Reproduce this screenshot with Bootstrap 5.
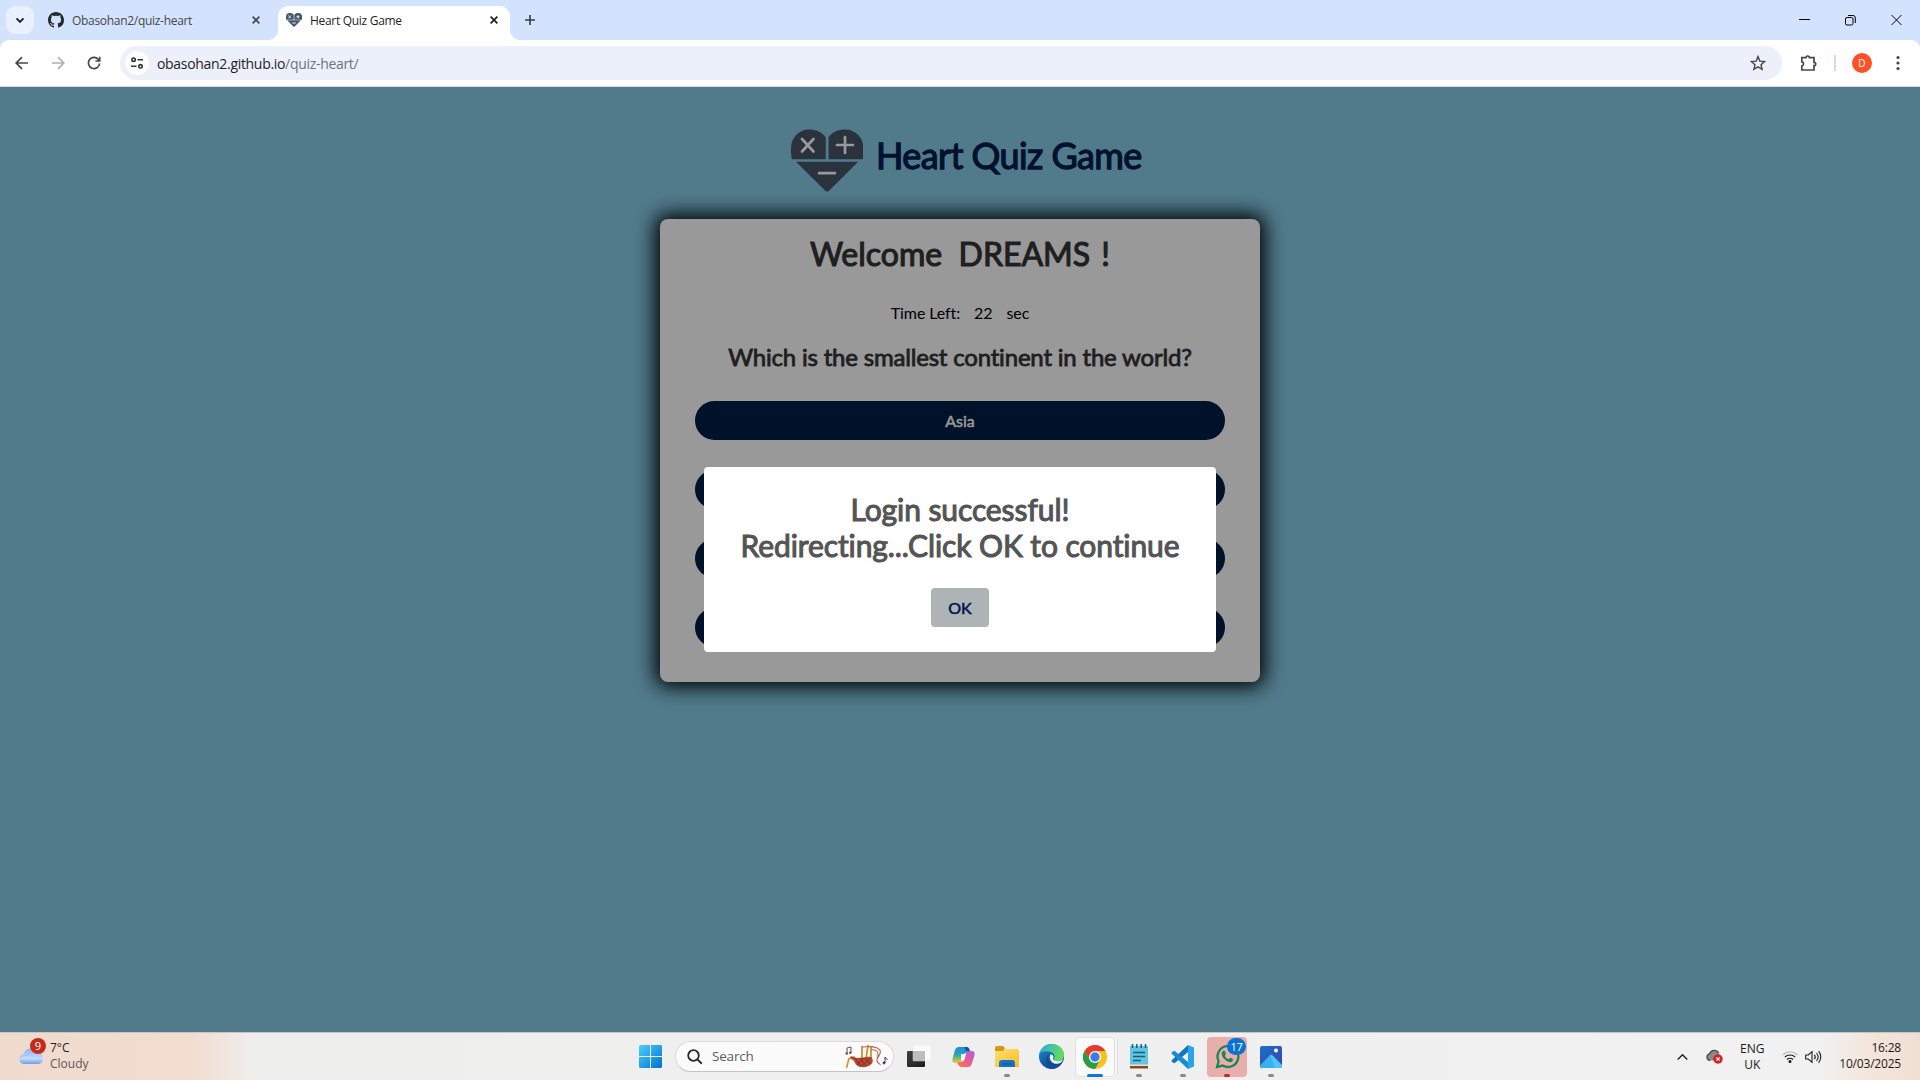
<!DOCTYPE html>
<html lang="en">
<head>
<meta charset="utf-8">
<title>Heart Quiz Game</title>
<link href="https://cdn.jsdelivr.net/npm/bootstrap@5.3.0/dist/css/bootstrap.min.css" rel="stylesheet">
<style>
body{width:1920px;height:1080px;overflow:hidden;font-family:"Open Sans","Noto Sans",sans-serif;color:#1f1f1f}
svg{display:block;flex:none}
.tabstrip{height:40px;background:#d3e3fd;font-size:12px;letter-spacing:-.3px}
.tabsearch{width:28px;height:28px;margin:6px 0 0 6px;border-radius:9px;background:#e9f1fe}
.btab{height:34px;margin-top:6px;padding-bottom:6px}
.btab-idle{width:230px;padding-left:14px;margin-right:14px;color:#474747;padding-bottom:6px}
.btab-on{width:232px;padding-left:8px;background:#fff;border-radius:10px 10px 0 0;position:relative}
.btab-on::before,.btab-on::after{content:"";position:absolute;bottom:0;width:10px;height:10px}
.btab-on::before{left:-10px;background:radial-gradient(circle at 0 0,transparent 9.6px,#fff 10.2px)}
.btab-on::after{right:-10px;background:radial-gradient(circle at 100% 0,transparent 9.6px,#fff 10.2px)}
.tabname{margin-left:8px;padding-top:2px;white-space:nowrap}
.toolrow-wrap{background:#d3e3fd}
.toolrow{height:47px;background:#fff;border-radius:9px 9px 0 0;border-bottom:1px solid #d5dbe0;padding:0 14px 0 14px}
.omni{height:34px;background:#ebf0fa;border-radius:17px;width:1662px;margin-left:18px;padding:0 16px 0 5px;font-size:14px}
.siteinfo{width:24px;height:24px;border-radius:50%;background:#fff}
.urltext{margin-left:8px;letter-spacing:-.31px;white-space:nowrap}
.avatar{width:20px;height:20px;border-radius:50%;background:#fa5128;color:#fff;font-size:10px}
.toolsep{width:2px;height:16px;background:#c9dcfb}
.stage{height:945px;background:#517b8b;font-family:Lato,sans-serif;font-variant-ligatures:none;position:relative}
.faux{font-weight:400;-webkit-text-stroke:.035em currentColor}
.brandrow{height:132px;padding-top:42px;padding-left:791px}
.brandname{font-size:36px;line-height:44px;letter-spacing:-.58px;margin:4px 0 0 12px;color:#00112d;white-space:nowrap}
.quizcard{width:600px;height:463px;margin:0 auto;border-radius:8px;background:#999;box-shadow:0 0 20px 5px #000;padding:13px 35px 35px}
.welcome{font-size:32px;line-height:44px;color:#1f1f1f;white-space:pre}
.bang{margin-left:3px}
.timerow{font-size:16px;line-height:24px;letter-spacing:-.1px;color:#000;margin-top:25px}
.question{font-size:24px;line-height:36px;letter-spacing:-.19px;margin-top:14px;color:#1f1f1f;white-space:nowrap}
.answer{height:39px;border-radius:19.5px;background:#00112a;color:#999;font-size:16px;line-height:39px}
.answers{gap:30px;margin-top:26px}
.dialogbox{position:absolute;left:704px;top:380px;width:512px;height:185px;background:#fff;border-radius:4px;padding-top:24px}
.dialogmsg{font-size:30px;line-height:36px;letter-spacing:-.1px;color:#545454;white-space:nowrap}
.okbtn{width:58px;height:39px;border-radius:4px;background:#aeb3b6;color:#00194a;font-size:16px;line-height:39px;margin-top:25px}
.taskbar{height:48px;border-top:1px solid #c9c5c5;background:linear-gradient(90deg,#efdacd 0,#f2ddd0 190px,#f0e6df 225px,#eeeeed 255px,#efefef 900px,#f1f1f1 1820px,#f4e6dc 1865px,#f1dfd3 1920px);font-size:12px;line-height:16px}
.weather{width:628px;padding-left:18px}
.wxbadge{position:absolute;left:12px;top:-8px;width:16px;height:16px;border-radius:50%;background:#c42b1c;color:#fff;font-size:11px;line-height:16px}
.slot{width:44px;height:47px;position:relative}
.slot-tile{width:40px;height:40px;border-radius:4px}
.slot-on{background:#fafafa;border:1px solid #e0e0e0;box-shadow:3px 0 0 -1px #f7f7f7,4px 0 0 -1px #dedede}
.slot-alert{background:#e8aeab}
.pip{position:absolute;bottom:3px;left:19px;width:6px;height:3px;border-radius:2px;background:#8a8a8a}
.pip-on{left:14px;width:16px;background:#0a78d4}
.pip-red{background:#c42b1c}
.msgbadge{position:absolute;left:22px;top:5px;width:19px;height:17px;border-radius:9px;background:#0a72d0;color:#fff;font-size:11px;line-height:17px;letter-spacing:-.3px}
.searchpill{width:219px;height:31px;border-radius:16px;background:#fbfbfb;border:1px solid #dadada;border-bottom-color:#c4c4c4;margin:0 3px 0 3px;padding:0 5px 0 11px;font-size:13.5px;color:#5d5d5d}
.barlift{margin-top:-2px}
.tray{color:#1b1b1b}
</style>
<script src="https://cdn.jsdelivr.net/npm/bootstrap@5.3.0/dist/js/bootstrap.bundle.min.js"></script>
</head>
<body class="d-flex flex-column">
<svg width="0" height="0" class="position-absolute"><defs>
<symbol id="heart" viewBox="0 0 72 63">
<path d="M34.700 30.200H.9C0 27 0 24 0 19A17.600 18.500 0 0 1 17.600.5C25 .5 31 3 34.700 8.500zM37.600 30.200H71.500C72.400 27 72.400 24 72.400 19A17.600 18.500 0 0 0 54.700.5C47 .5 41 3 37.600 8.500zM5 32.800H67.200L38 61.800Q36 63.400 34.300 61.800z"/>
</symbol>
<linearGradient id="gwin" x1="0" y1="0" x2="1" y2="1"><stop offset="0" stop-color="#4dd0fb"/><stop offset="1" stop-color="#0070d0"/></linearGradient>
<linearGradient id="gcl" x1="0" y1="0" x2="0" y2="1"><stop offset="0" stop-color="#8fb2ef"/><stop offset=".65" stop-color="#c4dcfa"/><stop offset="1" stop-color="#6f9be8"/></linearGradient>
<linearGradient id="gfold" x1="0" y1="0" x2="1" y2="1"><stop offset="0" stop-color="#ffdf72"/><stop offset="1" stop-color="#f8bd22"/></linearGradient>
<linearGradient id="gcoA" x1="0" y1="0" x2="0" y2="1"><stop offset="0" stop-color="#1b8df0"/><stop offset=".5" stop-color="#2ea7a0"/><stop offset="1" stop-color="#f2d02a"/></linearGradient>
<linearGradient id="gcoB" x1="1" y1="0" x2="0" y2="1"><stop offset="0" stop-color="#a462e8"/><stop offset=".5" stop-color="#ea5a98"/><stop offset="1" stop-color="#ff7a3a"/></linearGradient>
<linearGradient id="gedA" x1="0" y1="0" x2="1" y2=".3"><stop offset="0" stop-color="#2aa9e6"/><stop offset="1" stop-color="#63dd58"/></linearGradient>
<linearGradient id="gedB" x1="0" y1="0" x2=".6" y2="1"><stop offset="0" stop-color="#1b8fd8"/><stop offset="1" stop-color="#0c3f85"/></linearGradient>
<linearGradient id="gph" x1="0" y1="0" x2="1" y2="1"><stop offset="0" stop-color="#1a72c8"/><stop offset="1" stop-color="#3b3fae"/></linearGradient>
<linearGradient id="gtv" x1="0" y1="0" x2="1" y2="1"><stop offset="0" stop-color="#404040"/><stop offset="1" stop-color="#1c1c1c"/></linearGradient>
</defs></svg>

<header>
 <div class="tabstrip d-flex">
  <div class="tabsearch d-flex align-items-center justify-content-center"><svg width="10" height="10" fill="none" stroke="#1f1f1f" stroke-width="1.9"><path d="M1.500 3.300 5 6.800l3.500-3.500"/></svg></div>
  <div class="btab btab-idle d-flex align-items-center">
   <svg width="16" height="16" viewBox="0 0 16 16" fill="#24292f"><path d="M8 0C3.580 0 0 3.580 0 8c0 3.540 2.290 6.530 5.470 7.590.4.070.55-.17.55-.38 0-.19-.01-.82-.01-1.490-2.010.37-2.530-.49-2.690-.94-.09-.23-.48-.94-.82-1.130-.28-.15-.68-.52-.01-.53.63-.01 1.080.58 1.230.82.72 1.210 1.870.87 2.330.66.07-.52.28-.87.51-1.070-1.780-.2-3.640-.89-3.640-3.950 0-.87.31-1.590.82-2.150-.08-.2-.36-1.020.08-2.120 0 0 .67-.21 2.200.82.64-.18 1.320-.27 2-.27s1.360.09 2 .27c1.530-1.040 2.200-.82 2.200-.82.44 1.100.16 1.920.08 2.120.51.56.82 1.270.82 2.150 0 3.070-1.870 3.750-3.650 3.950.29.25.54.73.54 1.480 0 1.070-.01 1.930-.01 2.200 0 .21.15.46.55.38A8.010 8.010 0 0 0 16 8c0-4.420-3.580-8-8-8"/></svg>
   <span class="tabname">Obasohan2/quiz-heart</span>
   <svg class="ms-auto me-1" width="8" height="8" stroke="#474747" stroke-width="1.600"><path d="M.6.6l6.800 6.800M7.400.6.600 7.400"/></svg>
  </div>
  <div class="btab btab-on d-flex align-items-center">
   <svg width="16" height="14" viewBox="0 0 72 63" fill="#44566b"><use href="#heart" width="72" height="63"/><path d="M11 11l11 12M22 11L11 23M54 10v14M47 17h14M28 45h16" stroke="#fff" stroke-width="4"/></svg>
   <span class="tabname">Heart Quiz Game</span>
   <svg class="ms-auto" width="8" height="8" style="margin-right:12px" stroke="#1f1f1f" stroke-width="1.700"><path d="M.6.6l6.800 6.800M7.400.6.600 7.400"/></svg>
  </div>
  <svg width="10" height="40" style="margin-left:15px" stroke="#3c3c3c" stroke-width="1.600"><path d="M0 20h10M5 15v10"/></svg>
  <div class="ms-auto d-flex" style="padding-right:18px;gap:35px">
   <svg width="11" height="40" stroke="#000"><path d="M0 19.500h11"/></svg>
   <svg width="11" height="40" fill="none" stroke="#000"><rect x=".5" y="17.500" width="7.500" height="7.500" rx="1.500"/><path d="M3 15.500h5a2.300 2.300 0 0 1 2.300 2.300V23"/></svg>
   <svg width="11" height="40" stroke="#000"><path d="M.5 15l10 10M10.500 15l-10 10"/></svg>
  </div>
 </div>
 <div class="toolrow-wrap"><div class="toolrow d-flex align-items-center">
  <svg width="15" height="16" fill="none" stroke="#474747" stroke-width="1.700"><path d="M14 8H2.500M8 2.200 2.200 8 8 13.800"/></svg>
  <svg width="15" height="16" style="margin-left:22px" fill="none" stroke="#b0b0b0" stroke-width="1.700"><path d="M1 8h11.500M7 2.200 12.800 8 7 13.800"/></svg>
  <svg width="16" height="16" style="margin-left:20px" fill="none" stroke="#474747" stroke-width="1.700"><path d="M13.600 8.500A5.600 5.600 0 1 1 12.200 4.200L13.500 5.700M13.700 1.700V6H9.400"/></svg>
  <div class="omni d-flex align-items-center">
   <div class="siteinfo d-flex align-items-center justify-content-center"><svg width="14" height="14" fill="none" stroke="#303030" stroke-width="1.600"><circle cx="3.600" cy="3.700" r="1.700"/><path d="M7.500 3.700H13M1 10.300h5.500"/><circle cx="10.500" cy="10.300" r="1.700"/></svg></div>
   <span class="urltext">obasohan2.github.io<span class="text-secondary">/quiz-heart/</span></span>
   <svg class="ms-auto" width="16" height="16" viewBox="0 0 16 16" fill="none" stroke="#474747" stroke-width="1.400"><path d="M8 1.600l1.800 4.500 4.900.4-3.700 3.200 1.100 4.700L8 11.900l-4.100 2.500L5 9.700 1.300 6.500l4.900-.4z"/></svg>
  </div>
  <svg width="18" height="18" style="margin-left:18px" fill="none" stroke="#474747" stroke-width="1.700"><path d="M1.800 3.700H6a1.700 1.700 0 0 1 3.400 0H14v4.600a1.700 1.700 0 0 1 0 3.400V16H1.800v-4a2.200 2.200 0 0 0 0-4.300z"/></svg>
  <div class="toolsep" style="margin-left:16px"></div>
  <div class="avatar d-flex align-items-center justify-content-center" style="margin-left:16px">D</div>
  <svg width="4" height="16" style="margin-left:24px" fill="#474747"><circle cx="2" cy="2.500" r="1.600"/><circle cx="2" cy="8" r="1.600"/><circle cx="2" cy="13.500" r="1.600"/></svg>
 </div></div>
</header>

<main class="stage">
 <div class="brandrow d-flex">
  <svg width="73" height="63" viewBox="0 0 73 63" fill="#29323d"><use href="#heart" width="72" height="63" style="overflow:visible"/><path d="M11 10l11.500 12.500M22.500 10L11 22.500M54 8v16M46 16h16M28 44.200h16" stroke="#999" stroke-width="2.700" stroke-linecap="round"/></svg>
  <h1 class="brandname faux">Heart Quiz Game</h1>
 </div>
 <section class="quizcard d-flex flex-column text-center">
  <h2 class="welcome faux mb-0"><span>Welcome  DREAMS <span class="bang">!</span></span></h2>
  <div class="timerow d-flex justify-content-center"><span>Time Left:</span><span style="margin:0 14px">22</span><span>sec</span></div>
  <h3 class="question faux mb-0">Which is the smallest continent in the world?</h3>
  <div class="answers d-flex flex-column">
   <div class="answer faux">Asia</div><div class="answer"></div><div class="answer"></div><div class="answer"></div>
  </div>
 </section>
 <div class="dialogbox d-flex flex-column align-items-center text-center">
  <div class="dialogmsg faux">Login successful!<br>Redirecting...Click OK to continue</div>
  <div class="okbtn faux">OK</div>
 </div>
</main>

<footer class="taskbar d-flex align-items-center">
 <div class="weather d-flex align-items-center barlift">
  <div class="position-relative">
   <svg width="26" height="20" viewBox="0 0 26 20"><path d="M6 18a5 5 0 0 1-.6-9.900A8 8 0 0 1 20 6.500 5.800 5.800 0 0 1 20 18z" fill="url(#gcl)"/><path d="M1.500 12Q5 8 10 9.500" fill="none" stroke="#a8c4f4"/></svg>
   <div class="wxbadge text-center">9</div>
  </div>
  <div style="margin-left:6px"><div>7°C</div><div style="color:#5c5855">Cloudy</div></div>
 </div>
 <div class="slot d-flex align-items-center justify-content-center"><svg width="23" height="23" fill="url(#gwin)"><path d="M1 0h10v11H0V1zM12 0h10l1 1v10H12zM0 12h11v11H1l-1-1zM12 12h11v10l-1 1H12z"/></svg></div>
 <div class="searchpill d-flex align-items-center">
  <svg width="16" height="16" fill="none" stroke="#2b2b2b" stroke-width="1.800"><circle cx="6.500" cy="6.500" r="5.300"/><path d="M10.400 10.400l4.400 4.400" stroke-width="2"/></svg>
  <span style="margin-left:9px;letter-spacing:-.2px" class="barlift">Search</span>
  <svg class="ms-auto" width="43" height="24" viewBox="0 0 43 24" fill="none"><path d="M17 14V1M21 14L23 0M26 14V2" stroke="#c98f22" stroke-width="1.700"/><path d="M4 13L1.500 23M3 14l7-2" stroke="#c99a2c" stroke-width="1.600"/><path d="M5 12c2-2 4 1 8 1s9-2 13-1c4 4 1 9-6 10-7 1-9-2-11-6-1-2-3-1-4-4z" fill="#b9462e"/><path d="M10 13l6 8M15 13l6 8M20 13l5 6M12 20l7-7M17 21l8-8" stroke="#702c28" stroke-width=".8"/><path d="M17 2c6 0 13-2 18 3 2 5-4 7-3 11 1 3 4 3 3 4M26 5c5-1 9 2 6 9" stroke="#bd644b" stroke-width="1.100"/><path d="M2 9V3l4-1v6" stroke="#654d56" stroke-width="1"/><circle cx="1.700" cy="8.500" r="1.200" fill="#654d56"/><circle cx="5.200" cy="7.800" r="1.200" fill="#654d56"/><path d="M40 18v-6l2.500 3" stroke="#4c3568"/><circle cx="39" cy="18" r="1.400" fill="#4c3568"/></svg>
 </div>
 <div class="slot d-flex align-items-center justify-content-center"><svg width="24" height="22" class="barlift"><rect y="6" width="18" height="16" rx="1" fill="url(#gtv)"/><rect x="6" width="18" height="16" rx="1" fill="#fff" fill-opacity=".75" stroke="#ddd" stroke-width=".5"/><rect x="6" y="6" width="12" height="10" fill="#bdbdbd"/></svg></div>
 <div class="slot d-flex align-items-center justify-content-center"><svg width="23" height="22" viewBox="0 0 23 22"><path d="M7 1h7q2 0 3 3l1 3h-4q-2 0-3 3l-1 4q-1 3-4 3H3C0 17 0 14 1 11l2-7Q4 1 7 1z" fill="url(#gcoA)"/><path d="M16 21H9q-2 0-3-3l-1-2h4q3 0 4-4l1-4q1-3 4-3h2c3 0 3 3 2 6l-2 6q-1 4-4 4z" fill="url(#gcoB)"/><path d="M9 8h4l-1 6H9z" fill="#fff" opacity=".9"/><path d="M12 1h3q2 0 3 4h-4z" fill="#204db4"/></svg></div>
 <div class="slot d-flex align-items-center justify-content-center"><svg width="24" height="22"><path d="M0 2q0-2 2-2h6l2 2-2 4H0z" fill="#d59b10"/><path d="M0 5h8l3-2h11q2 0 2 2v15q0 1-1 1H0z" fill="url(#gfold)"/><path d="M4 17q0-3 3-3h10q3 0 3 3v4H4z" fill="#1673c9"/><path d="M7 18h10" stroke="#0b559f"/></svg><i class="pip"></i></div>
 <div class="slot d-flex align-items-center justify-content-center"><svg width="25" height="25" viewBox="0 0 24 24"><circle cx="12" cy="12" r="12" fill="url(#gedB)"/><path d="M.3 9.500C2 3 7 0 12 0c7 0 12 5 12 10.500 0 4-3 6-6 6-3 0-4.500-1-4-2 2-2 1-6-4-7C6 6.500 2 7 .3 9.500z" fill="url(#gedA)"/><path d="M10 9c-3 5 0 11 7 11 2 0 4-1 5-2-2 4-6 6-10 6C6 22 5 13 10 9z" fill="#124d9c"/><path d="M11 10c3 0 3.500 2.500 2.500 4-.5 1 1 2.500 4.500 2.500 3 0 4-1 5-2-1 4-3.500 4.500-6 4.500-5 0-8-5-6-9z" fill="#eef4f6"/></svg></div>
 <div class="slot d-flex align-items-center justify-content-center"><div class="slot-tile slot-on d-flex align-items-center justify-content-center"><svg width="24" height="24" viewBox="0 0 24 24"><circle cx="12" cy="12" r="12" fill="#fbc116"/><path d="M1.600 6A12 12 0 0 1 22.400 6H12L6.800 15z" fill="#e33b2e"/><path d="M1.600 6A12 12 0 0 0 12 24l5.200-9H6.800z" fill="#2a9b48"/><circle cx="12" cy="12" r="6" fill="#fff"/><circle cx="12" cy="12" r="4.700" fill="#3b7de8"/></svg></div><i class="pip pip-on"></i></div>
 <div class="slot d-flex align-items-center justify-content-center"><svg width="20" height="25"><rect x="1" y="2" width="18" height="20" fill="#62c4de"/><path d="M1 22h18v2.500H1z" fill="#8b4a16"/><path d="M1 20.500h18V22H1z" fill="#e9e3d8"/><path d="M3.500 0v4M7.800 0v4M12.200 0v4M16.500 0v4" stroke="#135f7b" stroke-width="1.500"/><path d="M4 8.500h12M4 12.500h12M4 16.500h8" stroke="#155f7d" stroke-width="1.700"/></svg><i class="pip"></i></div>
 <div class="slot d-flex align-items-center justify-content-center"><svg width="24" height="24" viewBox="0 0 24 24"><path d="M17 0l6 2.600v18.800L17 24z" fill="#29a3ee"/><path d="M17 0v7L3.500 18.300 1 17q-1-1 0-2z" fill="#0f76c0"/><path d="M17 24v-7L3.500 5.700 1 7q-1 1 0 2z" fill="#168bd6"/></svg><i class="pip"></i></div>
 <div class="slot d-flex align-items-center justify-content-center"><div class="slot-tile slot-alert d-flex align-items-center justify-content-center"><svg width="25" height="25" viewBox="0 0 24 24" fill="none" stroke="#1b8554"><path d="M2 22l1.500-5.500A10 10 0 1 1 7.500 20.700z" stroke-width="2.200"/><path d="M8 6.500c-3 2-1 6 1 8 3 3 6 4 8 1.500l.3-1.500-2.600-1.300-1.500 1.500c-2-.7-3-2-3.700-3.500l1-1.400L9.500 6.500z" fill="#1b8554" stroke="none"/></svg></div><div class="msgbadge text-center">17</div><i class="pip pip-red"></i></div>
 <div class="slot d-flex align-items-center justify-content-center"><svg width="22" height="22"><rect width="22" height="22" rx="2" fill="url(#gph)"/><path d="M0 19.500L9.500 9.500q1.500-1.500 3 0L22 19v1q0 2-2 2H2q-2 0-2-2z" fill="#35b2ee"/><path d="M10 9.200q1.500-1 2.700.3L22 19v1q0 2-2 2h-5z" fill="#70d4f8" opacity=".45"/><circle cx="16" cy="4.500" r="2" fill="#fff"/></svg><i class="pip"></i></div>
 <div class="tray ms-auto d-flex align-items-center" style="padding-right:19px">
  <svg width="11" height="8" fill="none" stroke="#222" stroke-width="1.400"><path d="M.7 6.500l4.800-4.800 4.800 4.800"/></svg>
  <svg width="17" height="15" style="margin-left:18px"><path d="M4 11.500a3.400 3.400 0 0 1-.4-6.700A5 5 0 0 1 12.800 4l1.500 7.500z" fill="#8a8a8a"/><path d="M4 11.500a3.400 3.400 0 0 1-.4-6.700A5 5 0 0 1 12.800 4" fill="none" stroke="#4d4d4d" stroke-width="1.300"/><circle cx="12" cy="10" r="4.700" fill="#dc1f26"/><path d="M10.300 8.300l3.400 3.400M13.700 8.300l-3.400 3.400" stroke="#fff" stroke-width="1.200"/></svg>
  <div class="text-center" style="width:28px;margin-left:15px">ENG<br>UK</div>
  <svg width="16" height="14" style="margin-left:16px" fill="none" stroke="#1d1d1d" stroke-width="1.200"><path d="M.8 5a10 10 0 0 1 14.400 0" stroke="#c2c2c2"/><path d="M2.800 7.200a7.300 7.300 0 0 1 10.400 0M5 9.500a4.300 4.300 0 0 1 6 0"/><circle cx="8" cy="11.500" r=".9" fill="#1d1d1d"/></svg>
  <svg width="18" height="14" style="margin-left:7px" fill="none" stroke="#1d1d1d" stroke-width="1.100"><path d="M.7 5v4h2.600L7 12.300V1.700L3.300 5zM9.400 4.800a3.500 3.500 0 0 1 0 4.400M11.500 3a6.300 6.300 0 0 1 0 8M13.600 1.200a9 9 0 0 1 0 11.600"/></svg>
  <div class="text-end barlift" style="margin-left:16px;letter-spacing:-.2px">16:28<br>10/03/2025</div>
 </div>
</footer>
</body>
</html>
